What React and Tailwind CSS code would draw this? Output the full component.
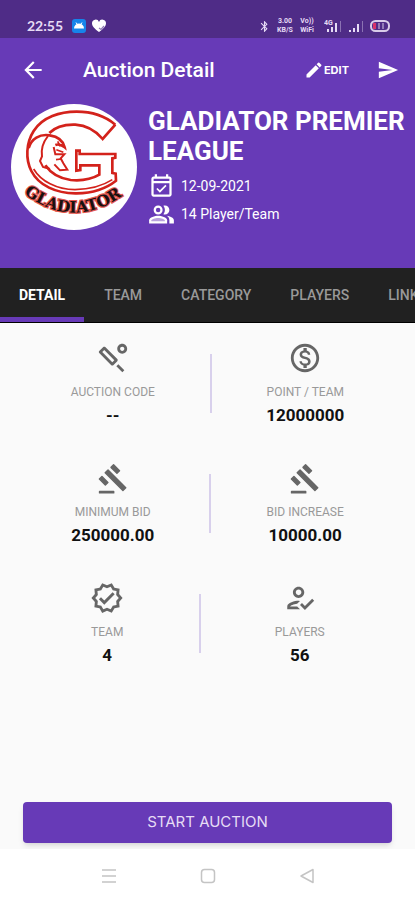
import { useState } from 'react'
import {
  MdArrowBack,
  MdBluetooth,
  MdEdit,
  MdSend,
  MdOutlineEventAvailable,
  MdOutlineSportsCricket,
  MdOutlineMonetizationOn,
  MdOutlineVerified,
  MdOutlineHowToReg,
} from 'react-icons/md'

// Gavel with rounded ends
const GavelIcon = ({ size, className }) => (
  <svg width={size} height={size} viewBox="0 0 24 24" className={className} fill="currentColor" stroke="currentColor" strokeLinejoin="round" strokeWidth="1">
    <path d="M2.500 21.500h10v1h-10zM6.500 8.300l2-2L21 18.800l-2 2zM12.400 2.700l4.200 4.200-1.800 1.800-4.200-4.200zM4.200 10.900l4.200 4.200-1.800 1.800-4.200-4.200z" />
  </svg>
)

const PeopleIcon = ({ size }) => (
  <svg width={size} height={size} viewBox="0 0 24 24" fill="currentColor">
    <path d="M16.670 13.130C18.040 14.060 19 15.320 19 17v3h4v-3c0-2.180-3.570-3.470-6.330-3.870zM15 12c2.210 0 4-1.790 4-4s-1.790-4-4-4c-.47 0-.91.1-1.330.24C14.500 5.270 15 6.580 15 8s-.5 2.730-1.330 3.760c.42.14.86.24 1.330.24z" />
    <circle cx="9" cy="8" r="3" fill="none" stroke="currentColor" strokeWidth="2" />
    <path d="M9 13c-2.670 0-8 1.340-8 4v3h16v-3c0-2.660-5.330-4-8-4z" />
    <path d="M9 15c-2.700 0-5.800 1.290-6 2.010V18h12v-1c-.2-.71-3.300-2-6-2z" fill="#b9a2dd" />
  </svg>
)

const tabs = ['DETAIL', 'TEAM', 'CATEGORY', 'PLAYERS', 'LINKS']

const statRows = [
  [
    { icon: MdOutlineSportsCricket, label: 'AUCTION CODE', value: '--' },
    { icon: MdOutlineMonetizationOn, label: 'POINT / TEAM', value: '12000000' },
  ],
  [
    { icon: GavelIcon, label: 'MINIMUM BID', value: '250000.00' },
    { icon: GavelIcon, label: 'BID INCREASE', value: '10000.00' },
  ],
  [
    { icon: MdOutlineVerified, label: 'TEAM', value: '4' },
    { icon: MdOutlineHowToReg, label: 'PLAYERS', value: '56' },
  ],
]

const StatusBar = () => (
  <div className="h-[38px] bg-[#4f2c87] pt-[14px] pl-[27px] pr-[25px] flex items-center justify-between text-[#e6dbf5]">
    <div className="flex items-center gap-1">
      <span className="font-['Lato',sans-serif] text-sm font-bold leading-6 mr-1">22:55</span>
      <svg width="16" height="16" viewBox="0 0 16 16">
        <rect x="1" y="1" width="14" height="14" rx="3" fill="#1684ea" />
        <path d="M3 10.500a5 5 0 0 1 10 0z" fill="#fff" />
        <path d="M5 4.500l1.200 2M11 4.500l-1.200 2" stroke="#fff" />
      </svg>
      <svg width="16" height="16" viewBox="0 0 16 16">
        <path d="M8 14C3 10 1 8 1 5.200a3.600 3.600 0 0 1 7-1.200 3.600 3.600 0 0 1 7 1.200C15 8 13 10 8 14z" fill="#fff" />
        <path d="M8 10l2 1.500L13 8" stroke="#8f78b4" strokeWidth="1.200" fill="none" />
      </svg>
    </div>
    <div className="flex items-center gap-[5px] font-['Roboto',sans-serif] font-bold text-[7px] leading-[9px]">
      <MdBluetooth size={13} />
      <div className="w-[18px] text-center">
        <div>3.00</div>
        <div>KB/S</div>
      </div>
      <div className="w-4 text-center">
        <div>Vo))</div>
        <div>WiFi</div>
      </div>
      <svg className="ml-1" width="18" height="14" viewBox="0 0 18 14" fill="currentColor">
        <text x="0" y="6" fontSize="7" fontWeight="700" fontFamily="Roboto">4G</text>
        <path d="M3 10h2v3H3zM7 8h2v5H7zM11 4h2v9h-2z" />
        <path d="M16 2h1v11h-1z" opacity=".4" />
      </svg>
      <svg width="18" height="14" viewBox="0 0 18 14" fill="currentColor">
        <path d="M2 11h2v2H2zM6 9h2v4H6zM10 5h2v8h-2z" />
        <path d="M15 2h1v11h-1z" opacity=".4" />
      </svg>
      <svg width="20" height="14" viewBox="0 0 20 14">
        <rect x="1" y="2" width="18" height="10" rx="4.500" fill="none" stroke="#d9cbe9" strokeWidth="2" />
        <path d="M3 4h3v6H3z" fill="#d8326a" />
        <path d="M9 4v6M13 4v6" stroke="#d9cbe9" strokeWidth="1" />
      </svg>
    </div>
  </div>
)

const GladiatorLogo = () => (
  <svg className="w-[126px] h-[126px] shrink-0" viewBox="33 27 378 378" role="img" aria-label="Gladiator">
    <circle cx="222" cy="216" r="189" fill="#fff" />
    <g fill="none" stroke="#d3221b" strokeWidth="8" strokeLinejoin="miter">
      {/* crest outline */}
      <path d="M346 89C315 63 275 50 230 50C180 50 128 66 101 108C78 144 76 192 94 228C116 271 168 296 230 295C276 294 318 281 348 257L347 236L337 234V190L346 188V177H239V167H229V227L241 225V211H298V239C276 252 243 258 212 255C181 251 153 236 136 211" />
      <path d="M148 114C166 96 196 88 226 89C258 91 286 106 308 132L346 89" />
      {/* helmet */}
      <path d="M86 159C94 132 119 116 149 121C176 125 190 139 194 157C184 149 174 147 166 150" />
      <path d="M144 123C128 143 123 164 126 184L120 198L129 216L150 222" strokeWidth="6" />
      <path d="M161 156L166 178H193L182 190L190 205L202 224L180 226L163 208" strokeWidth="6" />
      <path d="M169 164L190 172M168 194L184 192M173 139L181 154" strokeWidth="5" />
      <path d="M101 222C122 258 170 284 225 284C270 283 309 272 337 254" strokeWidth="5" />
    </g>
    <path id="logo-arc" d="M58 284Q216 418 382 292" fill="none" />
    <text
      fontFamily="'DejaVu Serif', serif"
      fontWeight="700"
      fontSize="47"
      textAnchor="middle"
      fill="#171111"
      stroke="#e5574f"
      strokeWidth="7"
      paintOrder="stroke"
    >
      <textPath href="#logo-arc" startOffset="50%">GLADIATOR</textPath>
    </text>
  </svg>
)

const Stat = ({ icon: Icon, label, value }) => (
  <div className="flex flex-col items-center">
    <Icon size={34} className="text-[#666]" />
    <dt className="mt-[7px] text-xs leading-5 text-[#999]">{label}</dt>
    <dd className="mt-[3px] text-[17px] leading-5 font-bold text-[#111]">{value}</dd>
  </div>
)

export default function App() {
  const [activeTab, setActiveTab] = useState('DETAIL')

  return (
    <div className="min-h-screen flex flex-col bg-[#fafafa] font-['Roboto',sans-serif] overflow-x-hidden">
      <StatusBar />

      <header className="bg-[#673ab7] text-white h-[230px]">
        <div className="flex items-center h-16 pl-5 pr-4">
          <button type="button" aria-label="Back">
            <MdArrowBack size={26} />
          </button>
          <h1 className="ml-[37px] text-[21px] leading-8 font-medium">Auction Detail</h1>
          <button type="button" className="ml-auto flex items-center font-['Inter',sans-serif] text-[11px] font-bold">
            <MdEdit size={20} />
            EDIT
          </button>
          <button type="button" aria-label="Send" className="ml-7">
            <MdSend size={22} />
          </button>
        </div>

        <div className="flex gap-[11px] pl-[11px] pt-[2px]">
          <GladiatorLogo />
          <div className="min-w-0 pt-[2px]">
            <h2 className="text-[26px] leading-[30px] font-bold">GLADIATOR PREMIER LEAGUE</h2>
            <p className="mt-[6px] flex items-center gap-[6px] text-sm leading-7">
              <MdOutlineEventAvailable size={27} />
              12-09-2021
            </p>
            <p className="flex items-center gap-[6px] text-sm leading-7">
              <PeopleIcon size={27} />
              14 Player/Team
            </p>
          </div>
        </div>
      </header>

      <nav className="flex gap-px h-[55px] bg-[#212121] border-b border-black overflow-hidden">
        {tabs.map((tab) => (
          <button
            key={tab}
            type="button"
            onClick={() => setActiveTab(tab)}
            className={
              tab === activeTab
                ? 'shrink-0 px-[19px] pt-1 border-b-[5px] border-[#673ab7] text-sm font-bold text-white'
                : 'shrink-0 px-[19px] pt-1 border-b-[5px] border-transparent text-sm font-medium text-[#999]'
            }
          >
            {tab}
          </button>
        ))}
      </nav>

      <main className="flex-1 flex flex-col">
        {statRows.map(([left, right]) => (
          <dl key={left.label} className="h-[120px] pt-[18px] px-4 flex justify-evenly">
            <Stat {...left} />
            <div className="mt-[13px] w-[2px] h-[59px] bg-[#d8d0ec]" />
            <Stat {...right} />
          </dl>
        ))}

        <div className="mt-auto px-[23px] pb-[6px]">
          <button
            type="button"
            className="w-full h-[41px] rounded bg-[#673ab7] shadow-md font-['Inter',sans-serif] text-[15px] text-[#e6dcf5]"
          >
            START AUCTION
          </button>
        </div>
      </main>

      <footer className="h-[51px] pt-[2px] bg-white flex items-center justify-center gap-[83px] text-[#c4c4c4]">
        <button type="button" aria-label="Recent apps">
          <svg width="16" height="16" viewBox="0 0 16 16" fill="none" stroke="currentColor" strokeWidth="1.500">
            <path d="M1 2h14M1 8h14M1 14h14" />
          </svg>
        </button>
        <button type="button" aria-label="Home">
          <svg width="16" height="16" viewBox="0 0 16 16" fill="none" stroke="currentColor" strokeWidth="1.500">
            <rect x="1.500" y="1.500" width="13" height="13" rx="3" />
          </svg>
        </button>
        <button type="button" aria-label="Back">
          <svg width="16" height="16" viewBox="0 0 16 16" fill="none" stroke="currentColor" strokeWidth="1.500" strokeLinejoin="round">
            <path d="M14 1.500v13L2 8z" />
          </svg>
        </button>
      </footer>
    </div>
  )
}
